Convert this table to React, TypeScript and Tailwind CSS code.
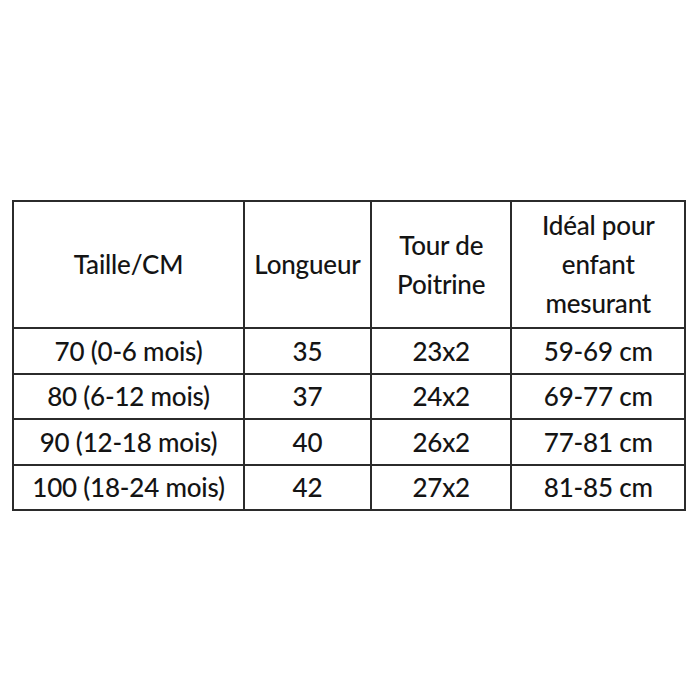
import React from "react";

const rows = [
  ["70 (0-6 mois)", "35", "23x2", "59-69 cm"],
  ["80 (6-12 mois)", "37", "24x2", "69-77 cm"],
  ["90 (12-18 mois)", "40", "26x2", "77-81 cm"],
  ["100 (18-24 mois)", "42", "27x2", "81-85 cm"],
];

export default function App() {
  return (
    <div className="w-[700px] h-[700px] bg-white pt-[200px] pl-[12px]" style={{ fontFamily: "Lato, 'Liberation Sans', sans-serif" }}>
      <table className="border-collapse text-[#141414] text-[26px] leading-[39px] font-medium w-[674px] tracking-[-0.2px]">
        <colgroup>
          <col className="w-[232px]" />
          <col className="w-[127px]" />
          <col className="w-[141px]" />
          <col className="w-[174px]" />
        </colgroup>
        <thead>
          <tr className="h-[127px]">
            <th className="border-2 border-[#2b2b2b] font-medium text-center align-middle p-0">Taille/CM</th>
            <th className="border-2 border-[#2b2b2b] font-medium text-center align-middle p-0">Longueur</th>
            <th className="border-2 border-[#2b2b2b] font-medium text-center align-middle p-0">Tour de<br />Poitrine</th>
            <th className="border-2 border-[#2b2b2b] font-medium text-center align-middle p-0">Idéal pour<br />enfant<br />mesurant</th>
          </tr>
        </thead>
        <tbody>
          {rows.map((r) => (
            <tr key={r[0]} className="h-[45.5px]">
              {r.map((c, i) => (
                <td key={i} className="border-2 border-[#2b2b2b] text-center align-middle p-0 leading-[30px]">{c}</td>
              ))}
            </tr>
          ))}
        </tbody>
      </table>
    </div>
  );
}
